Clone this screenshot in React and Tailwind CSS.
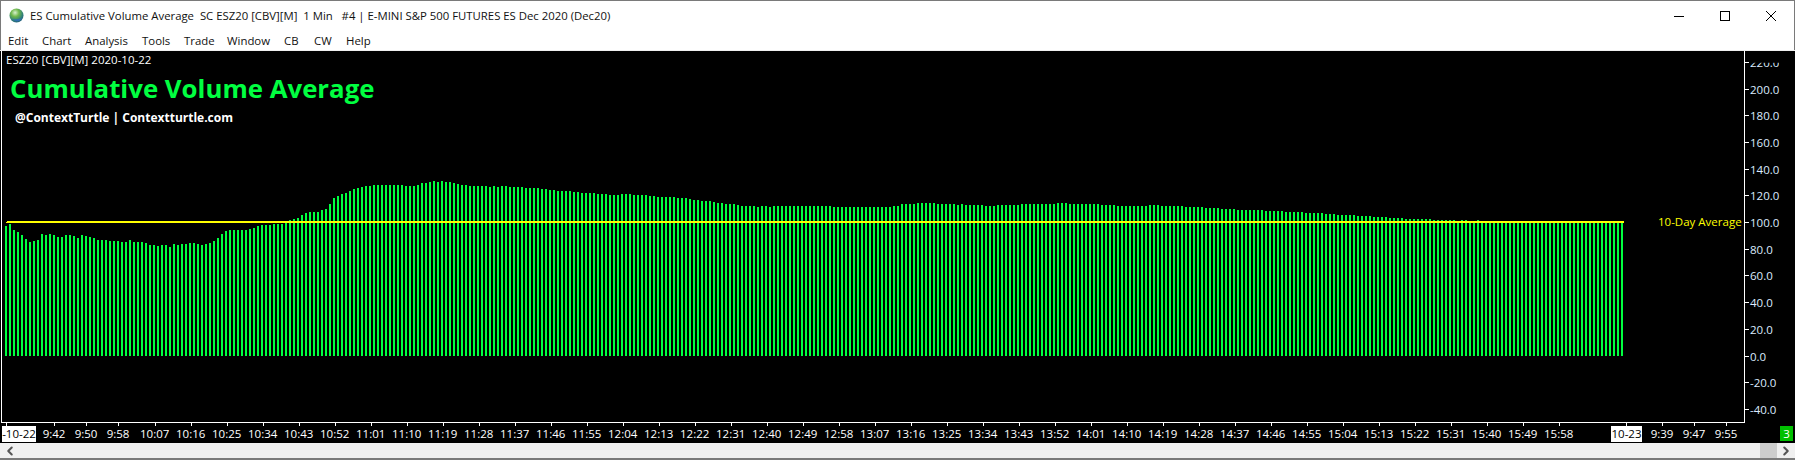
import { ChevronLeft, ChevronRight } from "lucide-react";

const uiFont = "font-['Open_Sans','Noto_Sans',sans-serif]";

// top of each volume bar in page pixels, as [y, repeat]
const barRuns = [
  [226, 1], [224, 1], [230, 1], [232, 1], [235, 1], [239, 1], [242, 1], [241, 1], [240, 1], [234, 1], [235, 1], [234, 1], [235, 1],
  [237, 2], [235, 2], [236, 1], [238, 1], [235, 1], [236, 1], [237, 1], [238, 1], [240, 3], [241, 3], [242, 2], [240, 1], [242, 3],
  [243, 1], [245, 2], [246, 1], [245, 2], [247, 1], [244, 1], [245, 1], [244, 2], [243, 2], [244, 1], [245, 1], [244, 1], [243, 1],
  [241, 1], [238, 1], [234, 1], [231, 1], [230, 5], [229, 1], [228, 1], [226, 1], [225, 3], [224, 3], [223, 1], [220, 1], [219, 1],
  [218, 1], [215, 1], [213, 1], [212, 3], [210, 1], [209, 1], [204, 1], [198, 1], [196, 1], [194, 1], [193, 1], [191, 1], [189, 1],
  [188, 1], [187, 1], [186, 2], [185, 8], [186, 3], [185, 1], [183, 2], [182, 1], [181, 1], [182, 1], [181, 1], [182, 2], [183, 1],
  [184, 1], [185, 2], [186, 3],
  [186, 2], [187, 1], [186, 1], [187, 1], [186, 2], [187, 4], [188, 4], [189, 2], [190, 2], [191, 4], [192, 2], [193, 4], [194, 3],
  [195, 3], [194, 3], [195, 4], [196, 2], [197, 5], [198, 3], [199, 1], [200, 2], [201, 3], [202, 1], [203, 2], [204, 3], [205, 1],
  [206, 4], [207, 1], [206, 2], [207, 1], [206, 15], [207, 12],
  [207, 3], [206, 2], [204, 4], [203, 5], [204, 5], [205, 1], [204, 1], [205, 5], [206, 3], [205, 6], [204, 9], [203, 3], [204, 8],
  [205, 4], [206, 8], [205, 3], [206, 6], [207, 5], [208, 4], [209, 4], [210, 7], [211, 5], [212, 5], [213, 5], [214, 3], [215, 5],
  [216, 4], [217, 4], [218, 4], [219, 7], [220, 6], [222, 1], [220, 2], [222, 2], [220, 1], [222, 36],
];
const barTops = barRuns.flatMap(([y, n]) => Array(n).fill(y)).slice(0, 405);

const priceLabels = [220, 200, 180, 160, 140, 120, 100, 80, 60, 40, 20, 0, -20, -40];
const priceY = (v) => 356 - v * 1.335;

const menuItems = [
  { label: "Edit", width: "w-[34px]" },
  { label: "Chart", width: "w-[43px]" },
  { label: "Analysis", width: "w-[57px]" },
  { label: "Tools", width: "w-[42px]" },
  { label: "Trade", width: "w-[43px]" },
  { label: "Window", width: "w-[57px]" },
  { label: "CB", width: "w-[30px]" },
  { label: "CW", width: "w-[32px]" },
  { label: "Help", width: "w-[32px]" },
];

const timeLabels = [
  { t: "9:42", x: 54 },
  { t: "9:50", x: 86 },
  { t: "9:58", x: 118 },
  ...Array.from({ length: 40 }, (_, i) => {
    const m = 10 * 60 + 7 + i * 9;
    return { t: `${Math.floor(m / 60)}:${String(m % 60).padStart(2, "0")}`, x: 154.7 + i * 36 };
  }),
  { t: "9:39", x: 1662 },
  { t: "9:47", x: 1694 },
  { t: "9:55", x: 1726 },
];

function Globe() {
  return (
    <svg width="15" height="15" viewBox="0 0 15 15" className="shrink-0">
      <defs>
        <radialGradient id="globe" cx="0.4" cy="0.3" r="0.8">
          <stop offset="0" stopColor="#d8f0d0" />
          <stop offset="0.35" stopColor="#6fb84a" />
          <stop offset="0.7" stopColor="#2f7f7a" />
          <stop offset="1" stopColor="#1d4f80" />
        </radialGradient>
      </defs>
      <circle cx="7.5" cy="7.5" r="7" fill="url(#globe)" />
      <path d="M3 11c2 1.500 4 2.500 7 2 1-.5 2-1.500 3-3-2 1-6 2-10 1z" fill="#2f6fb0" />
    </svg>
  );
}

function WindowButtons() {
  return (
    <div className="ml-auto flex items-center">
      <div className="flex w-[46px] justify-center">
        <svg width="10" height="10" shapeRendering="crispEdges"><rect x="0" y="5" width="10" height="1" fill="#000" /></svg>
      </div>
      <div className="flex w-[46px] justify-center">
        <svg width="10" height="10" shapeRendering="crispEdges"><rect x="0.5" y="0.5" width="9" height="9" fill="none" stroke="#000" /></svg>
      </div>
      <div className="flex w-[46px] justify-center">
        <svg width="10" height="10"><path d="M0 0L10 10M10 0L0 10" stroke="#000" strokeWidth="1" /></svg>
      </div>
    </div>
  );
}

function VolumeChart() {
  return (
    <svg className="absolute left-[-2px] top-0" width="1744" height="371" viewBox="0 51 1744 371">
      {barTops.map((y, i) => (
        <rect key={i} x={5 + i * 4} y={y} width="2" height={356 - y} fill="#00ff40" />
      ))}
      <rect x="7" y="221" width="1617" height="2" fill="#ffff00" />
      <rect x="6" y="222" width="2" height="1" fill="#ffff00" />
    </svg>
  );
}

export default function App() {
  return (
    <div className={`flex h-[460px] w-[1795px] flex-col overflow-hidden bg-white ${uiFont}`}>
      <div className="flex h-[30px] shrink-0 items-center border-x border-t border-[#7a7a7a] pl-[8px] text-[11.35px] text-[#111]">
        <Globe />
        <span className="ml-[6px] whitespace-pre">
          ES Cumulative Volume Average  SC ESZ20 [CBV][M]  1 Min   #4 | E-MINI S&amp;P 500 FUTURES ES Dec 2020 (Dec20)
        </span>
        <WindowButtons />
      </div>

      <div className="flex h-[20px] shrink-0 items-center border-x border-[#7a7a7a] pl-[7px] pt-[2px] text-[11.4px] text-[#111]">
        {menuItems.map((m) => (
          <span key={m.label} className={m.width}>{m.label}</span>
        ))}
      </div>
      <div className="h-px shrink-0 bg-[#f0f0f0]" />

      <div className="flex h-[372px] shrink-0 bg-black">
        <div className="relative ml-px w-[1744px] shrink-0 border-b border-l border-r border-white">
          <VolumeChart />
          <div className="relative">
            <div className="pl-[4px] pt-px text-[11.5px] leading-[15px] text-white">ESZ20 [CBV][M] 2020-10-22</div>
            <div className="mt-[6px] pl-[8px] text-[25.8px] font-bold leading-[30px] text-[#00ff40]">Cumulative Volume Average</div>
            <div className="mt-[7px] pl-[13px] text-[12px] font-bold leading-[16px] text-white">@ContextTurtle | Contextturtle.com</div>
          </div>
          <span className="absolute left-[1656px] top-[162px] whitespace-nowrap text-[11.5px] leading-[18px] text-[#ffff00]">
            10-Day Average
          </span>
        </div>
        <div className="relative flex-1 overflow-hidden">
          {priceLabels.map((v) => (
            <div key={v} className="absolute left-0 flex h-[16px] items-center" style={{ top: priceY(v) - 51 - 8 }}>
              <span className="h-px w-[4px] bg-white" />
              <span className={`${v === 220 ? "[clip-path:inset(8px_0_0_0)]" : ""} ml-px mt-px text-[11.5px] leading-[16px] text-[#dcebff]`}>
                {v.toFixed(1)}
              </span>
            </div>
          ))}
        </div>
      </div>

      <div className="relative h-[20px] shrink-0 bg-black text-[11.5px] leading-[16px] text-white">
        <span className="absolute left-[6px] top-0 h-[3px] w-px bg-white" />
        <span className="absolute left-[2px] top-[3px] h-[16px] w-[34px] bg-white text-center text-black">-10-22</span>
        {timeLabels.map(({ t, x }) => (
          <div key={t + x}>
            <span className="absolute top-0 h-[3px] w-px bg-white" style={{ left: Math.round(x) }} />
            <span className="absolute top-[3px] w-[40px] text-center" style={{ left: x - 20 }}>{t}</span>
          </div>
        ))}
        <span className="absolute left-[1626px] top-0 h-[3px] w-px bg-white" />
        <span className="absolute left-[1611px] top-[3px] h-[16px] w-[31px] bg-white text-center text-black">10-23</span>
        <span className="absolute left-[1780px] top-[3px] h-[15px] w-[13px] bg-[#00c000] text-center leading-[15px]">3</span>
      </div>

      <div className="flex h-[15px] shrink-0 items-center bg-[#f0f0f0] text-[#555]">
        <ChevronLeft size={14} strokeWidth={3.5} className="ml-[3px]" />
        <div className="ml-auto h-full w-[17px] bg-[#cdcdcd]" />
        <ChevronRight size={14} strokeWidth={3.5} className="ml-[2px] mr-[2px]" />
      </div>
      <div className="h-[2px] shrink-0 bg-[#7a7a7a]" />
    </div>
  );
}
